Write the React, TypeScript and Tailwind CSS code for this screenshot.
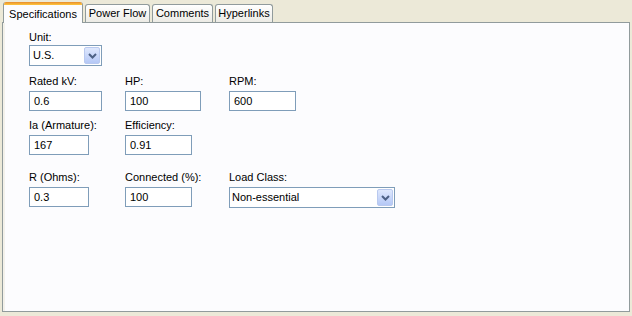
import React from "react";

const font = { fontFamily: "Tahoma, 'Liberation Sans', Arial, sans-serif" };

function Arrow() {
  return (
    <div className="flex h-[17px] w-[16px] items-center justify-center rounded-[2px] border border-[#b9c9ef] bg-gradient-to-b from-[#dfe8fd] to-[#b5c8f6]">
      <svg width="9" height="6" viewBox="0 0 9 6">
        <path d="M1 1 L4.5 4.5 L8 1" fill="none" stroke="#4d6185" strokeWidth="2" />
      </svg>
    </div>
  );
}

function Field({ label, value, w }: { label: string; value: string; w: string }) {
  return (
    <div className="flex flex-col">
      <div className="h-[13px] leading-[13px]">{label}</div>
      <div
        className={`mt-[3px] flex h-[20px] items-center border border-[#7f9db9] bg-white pl-[4px] ${w}`}
      >
        {value}
      </div>
    </div>
  );
}

export default function App() {
  const tabs = [
    { t: "Power Flow", w: "w-[65px]" },
    { t: "Comments", w: "w-[61px]" },
    { t: "Hyperlinks", w: "w-[58px]" },
  ];
  return (
    <div
      className="h-[316px] w-[632px] bg-[#ece9d8] px-[2px] pt-[2px] text-[11px] text-black"
      style={font}
    >
      <div className="relative z-10 flex h-[20px] items-end pl-[1px]">
        <div className="-mb-px flex h-[21px] w-[80px] flex-col overflow-hidden rounded-t-[3px] border-x border-[#919b9c] bg-[#fcfcfe]">
          <div className="h-[3px] bg-gradient-to-b from-[#e68b2c] to-[#ffc73c]" />
          <div className="flex flex-1 items-start justify-center pt-[1px]">Specifications</div>
        </div>
        {tabs.map((t) => (
          <div
            key={t.t}
            className={`ml-[2px] flex h-[18px] items-center justify-center rounded-t-[3px] border border-b-0 border-[#919b9c] bg-gradient-to-b from-[#ffffff] to-[#ecebe5] ${t.w}`}
          >
            {t.t}
          </div>
        ))}
      </div>
      <div className="h-[290px] w-[628px] border border-[#919b9c] bg-[#fcfcfe] pl-[26px] pt-[8px] shadow-[inset_2px_0_0_#f3f1ea]">
        <div className="flex flex-col">
          <div className="h-[13px] leading-[13px]">Unit:</div>
          <div className="mt-[1px] flex h-[21px] w-[73px] items-center justify-between border border-[#7f9db9] bg-white pl-[3px] pr-[1px]">
            <span>U.S.</span>
            <Arrow />
          </div>
        </div>

        <div className="mt-[9px] flex">
          <div className="w-[96px]">
            <Field label="Rated kV:" value="0.6" w="w-[73px]" />
          </div>
          <div className="w-[104px]">
            <Field label="HP:" value="100" w="w-[76px]" />
          </div>
          <Field label="RPM:" value="600" w="w-[67px]" />
        </div>

        <div className="mt-[8px] flex">
          <div className="w-[96px]">
            <Field label="Ia (Armature):" value="167" w="w-[60px]" />
          </div>
          <Field label="Efficiency:" value="0.91" w="w-[67px]" />
        </div>

        <div className="mt-[16px] flex">
          <div className="w-[96px]">
            <Field label="R (Ohms):" value="0.3" w="w-[60px]" />
          </div>
          <div className="w-[104px]">
            <Field label="Connected (%):" value="100" w="w-[67px]" />
          </div>
          <div className="flex flex-col">
            <div className="h-[13px] leading-[13px]">Load Class:</div>
            <div className="mt-[3px] flex h-[21px] w-[166px] items-center justify-between border border-[#7f9db9] bg-white pl-[2px] pr-[1px]">
              <span>Non-essential</span>
              <Arrow />
            </div>
          </div>
        </div>
      </div>
    </div>
  );
}
